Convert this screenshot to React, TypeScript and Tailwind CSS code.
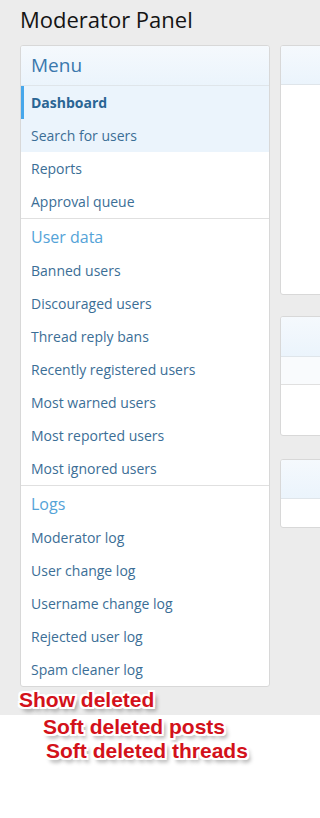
import React from 'react';

interface Section {
    title?: string;
    items: string[];
}

const sections: Section[] = [
    { items: ['Dashboard', 'Search for users', 'Reports', 'Approval queue'] },
    {
        title: 'User data',
        items: [
            'Banned users',
            'Discouraged users',
            'Thread reply bans',
            'Recently registered users',
            'Most warned users',
            'Most reported users',
            'Most ignored users',
        ],
    },
    { title: 'Logs', items: ['Moderator log', 'User change log', 'Username change log', 'Rejected user log', 'Spam cleaner log'] },
];

const highlighted = ['Dashboard', 'Search for users'];

const outline =
    '[text-shadow:-2px_-2px_0_#fff,2px_-2px_0_#fff,-2px_2px_0_#fff,2px_2px_0_#fff,0_2px_0_#fff,0_-2px_0_#fff,2px_0_0_#fff,-2px_0_0_#fff,3px_4px_4px_rgba(0,0,0,0.45)]';

const App: React.FC = () => {
    return (
        <div className="relative w-full max-w-full min-h-[818px] bg-white overflow-hidden font-['Open_Sans',sans-serif]">
            {/* Gray page area */}
            <div className="bg-[#ececec] h-[715px] pl-[20px] pt-[4px] overflow-hidden">
                <h1 className="text-[22px] leading-[30px] text-[#141414] mb-[11px] whitespace-nowrap">Moderator Panel</h1>

                <div className="flex gap-[10px]">
                    {/* Left menu */}
                    <div className="w-[250px] shrink-0 bg-white border border-[#d8d8d8] rounded-[3px] overflow-hidden">
                        <div className="h-[40px] flex items-center px-[10px] bg-gradient-to-b from-[#f5f9fd] to-[#ebf4fc] border-b border-[#dfe5ea]">
                            <span className="text-[19px] text-[#3a78ad]">Menu</span>
                        </div>
                        {sections.map((section, si) => (
                            <div key={si} className={si > 0 ? 'border-t border-[#e0e0e0]' : ''}>
                                {section.title && (
                                    <div className="h-[35px] flex items-center px-[10px] text-[16px] text-[#54a3d8]">
                                        {section.title}
                                    </div>
                                )}
                                {section.items.map((item) => {
                                    const isActive = item === 'Dashboard';
                                    const isHl = highlighted.includes(item);
                                    return (
                                        <div
                                            key={item}
                                            className={`h-[33px] flex items-center text-[14px] whitespace-nowrap ${
                                                isHl ? 'bg-[#ebf4fc]' : ''
                                            } ${
                                                isActive
                                                    ? 'border-l-[3px] border-[#47a7eb] pl-[7px] font-bold text-[#2a6594]'
                                                    : 'pl-[10px] text-[#3b6e96]'
                                            }`}
                                        >
                                            {item}
                                        </div>
                                    );
                                })}
                            </div>
                        ))}
                    </div>

                    {/* Right column, cut off by the window */}
                    <div className="flex-1 min-w-0 overflow-hidden">
                        <div className="flex flex-col w-[120px]">
                            <div className="h-[250px] bg-white border border-[#d8d8d8] rounded-[3px] overflow-hidden">
                                <div className="h-[39px] bg-gradient-to-b from-[#f5f9fd] to-[#ebf4fc] border-b border-[#dfe5ea]" />
                            </div>
                            <div className="mt-[21px] h-[120px] bg-white border border-[#d8d8d8] rounded-[3px] overflow-hidden">
                                <div className="h-[40px] bg-gradient-to-b from-[#f5f9fd] to-[#ebf4fc] border-b border-[#dfe5ea]" />
                                <div className="h-[28px] bg-[#f9fbfd] border-b border-[#e0e0e0]" />
                            </div>
                            <div className="mt-[23px] h-[69px] bg-white border border-[#d8d8d8] rounded-[3px] overflow-hidden">
                                <div className="h-[39px] bg-gradient-to-b from-[#f5f9fd] to-[#ebf4fc] border-b border-[#dfe5ea]" />
                            </div>
                        </div>
                    </div>
                </div>
            </div>

            {/* Red annotations laid over the page */}
            <div className="absolute left-0 top-[688px] flex flex-col font-['Liberation_Sans',Arial,sans-serif] font-bold text-[21px] leading-[24px] text-[#d3111a] whitespace-nowrap">
                <span className={`pl-[19px] ${outline}`}>Show deleted</span>
                <span className={`pl-[43px] mt-[3px] ${outline}`}>Soft deleted posts</span>
                <span className={`pl-[46px] ${outline}`}>Soft deleted threads</span>
            </div>
        </div>
    );
};

export default App;
